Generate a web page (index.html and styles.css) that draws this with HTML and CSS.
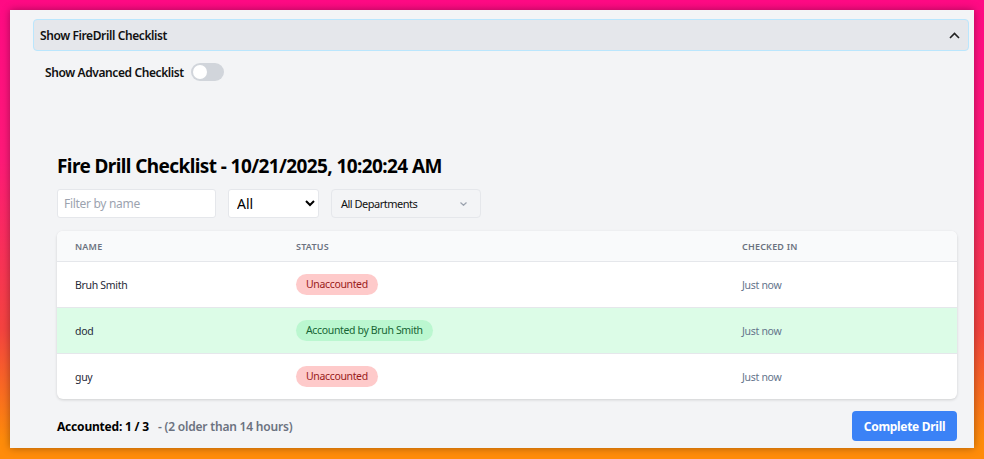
FILE: index.html
```html
<!DOCTYPE html>
<html>
<head>
<meta charset="utf-8">
<link rel="stylesheet" href="styles.css">
</head>
<body>
<div class="panel">
  <div class="acc-header">
    <span class="acc-title">Show FireDrill Checklist</span>
    <svg class="acc-chevron" width="11" height="7" viewBox="0 0 11 7"><path d="M1 6 L5.5 1.5 L10 6" fill="none" stroke="#222" stroke-width="1.6"/></svg>
  </div>
  <div class="toggle-row">
    <span class="toggle-label">Show Advanced Checklist</span>
    <span class="toggle"><span class="knob"></span></span>
  </div>
  <div class="content">
    <h1 class="title">Fire Drill Checklist - 10/21/2025, 10:20:24 AM</h1>
    <div class="filters">
      <input class="filter-input" type="text" placeholder="Filter by name">
      <select class="status-select"><option>All</option></select>
      <div class="dept-select">
        <span>All Departments</span>
        <svg width="7" height="4" viewBox="0 0 7 4"><path d="M0.5 0.5 L3.5 3.3 L6.5 0.5" fill="none" stroke="#9ca3af" stroke-width="1.2"/></svg>
      </div>
    </div>
    <div class="card">
      <div class="row head">
        <div class="cell">NAME</div>
        <div class="cell">STATUS</div>
        <div class="cell">CHECKED IN</div>
      </div>
      <div class="row">
        <div class="cell name">Bruh Smith</div>
        <div class="cell"><span class="badge red">Unaccounted</span></div>
        <div class="cell time">Just now</div>
      </div>
      <div class="row green">
        <div class="cell name">dod</div>
        <div class="cell"><span class="badge ok">Accounted by Bruh Smith</span></div>
        <div class="cell time">Just now</div>
      </div>
      <div class="row">
        <div class="cell name">guy</div>
        <div class="cell"><span class="badge red">Unaccounted</span></div>
        <div class="cell time">Just now</div>
      </div>
    </div>
    <div class="footer">
      <div class="summary"><span class="count">Accounted: 1 / 3</span><span class="older">- (2 older than 14 hours)</span></div>
      <button class="complete">Complete Drill</button>
    </div>
  </div>
</div>
</body>
</html>
```

FILE: styles.css
```css
* { box-sizing: border-box; }
html, body { margin: 0; height: 459px; overflow: hidden; }
body {
  background: linear-gradient(to bottom, #ff0a84 0%, #ff1a78 35%, #f5443f 72%, #ff8c0a 96%);
  padding: 10px;
  font-family: "Noto Sans", "Open Sans", sans-serif;
  color: #111827;
}
.panel {
  width: 964px;
  height: 438px;
  background: #f3f4f6;
  box-shadow: 0 0 8px rgba(0,0,0,0.35);
  padding: 9px 5px 0 23px;
}
.acc-header {
  height: 32px;
  background: #e5e7eb;
  border: 1px solid #bae6fd;
  border-radius: 4px;
  display: flex;
  align-items: center;
  justify-content: space-between;
  padding: 0 8px 0 6px;
}
.acc-title { font-size: 12px; font-weight: 600; color: #111; letter-spacing: -0.4px; }
.toggle-row {
  display: flex;
  align-items: center;
  gap: 7px;
  margin-top: 12px;
  padding-left: 12px;
}
.toggle-label { font-size: 12px; font-weight: 600; color: #111; letter-spacing: -0.4px; }
.toggle {
  width: 33px; height: 18px; border-radius: 9px; background: #d1d5db;
  display: flex; align-items: center; padding-left: 2px;
}
.knob { width: 14px; height: 14px; border-radius: 50%; background: #fff; }
.content { margin: 0 12px 0 24px; }
.title { font-size: 19px; font-weight: 700; margin: 72px 0 0; line-height: 26px; color: #000; letter-spacing: -0.6px; }
.filters { display: flex; gap: 12px; margin-top: 10px; height: 29px; }
.filter-input {
  width: 159px; height: 29px; border: 1px solid #e5e7eb; border-radius: 3px;
  background: #fff; padding: 0 6px; font-family: inherit; font-size: 12px; letter-spacing: -0.3px;
}
.filter-input::placeholder { color: #9ca3af; }
.status-select {
  width: 91px; height: 29px; border: 1px solid #e5e7eb; border-radius: 3px;
  background: #fff; font-family: inherit; font-size: 14px; padding: 0 4px; color: #000;
}
.dept-select {
  width: 150px; height: 29px; border: 1px solid #e5e7eb; border-radius: 4px;
  background: #f3f4f6; display: flex; align-items: center; justify-content: space-between;
  padding: 0 13px 0 9px; font-size: 11px; color: #111; letter-spacing: -0.5px;
}
.card {
  margin-top: 13px; background: #fff; border-radius: 6px;
  box-shadow: 0 1px 3px rgba(0,0,0,0.15); overflow: hidden;
}
.row {
  display: grid; grid-template-columns: 221px 446px 1fr; align-items: center;
  height: 46px; border-top: 1px solid #e5e7eb;
}
.row.head { height: 30px; border-top: 0; background: #f9fafb; }
.row.head .cell { font-size: 9px; font-weight: 600; color: #6b7280; letter-spacing: 0.2px; }
.cell { padding: 0 18px; font-size: 10.5px; letter-spacing: -0.3px; }
.name { color: #1f2937; }
.time { color: #64748b; }
.row.green { background: #dcfce7; }
.badge { display: inline-block; height: 21px; line-height: 21px; padding: 0 10px; border-radius: 11px; font-size: 10.5px; letter-spacing: -0.35px; }
.badge.red { background: #fecaca; color: #991b1b; }
.badge.ok { background: #bbf7d0; color: #166534; }
.footer { display: flex; justify-content: space-between; align-items: center; margin-top: 12px; }
.summary { font-size: 12px; font-weight: 700; letter-spacing: -0.2px; }
.count { color: #000; }
.older { color: #6b7280; margin-left: 9px; font-weight: 600; }
.complete {
  width: 105px; height: 30px; background: #3b82f6; color: #fff; border: 0; border-radius: 4px;
  font-family: inherit; font-size: 12px; font-weight: 700; letter-spacing: -0.3px;
}
```
